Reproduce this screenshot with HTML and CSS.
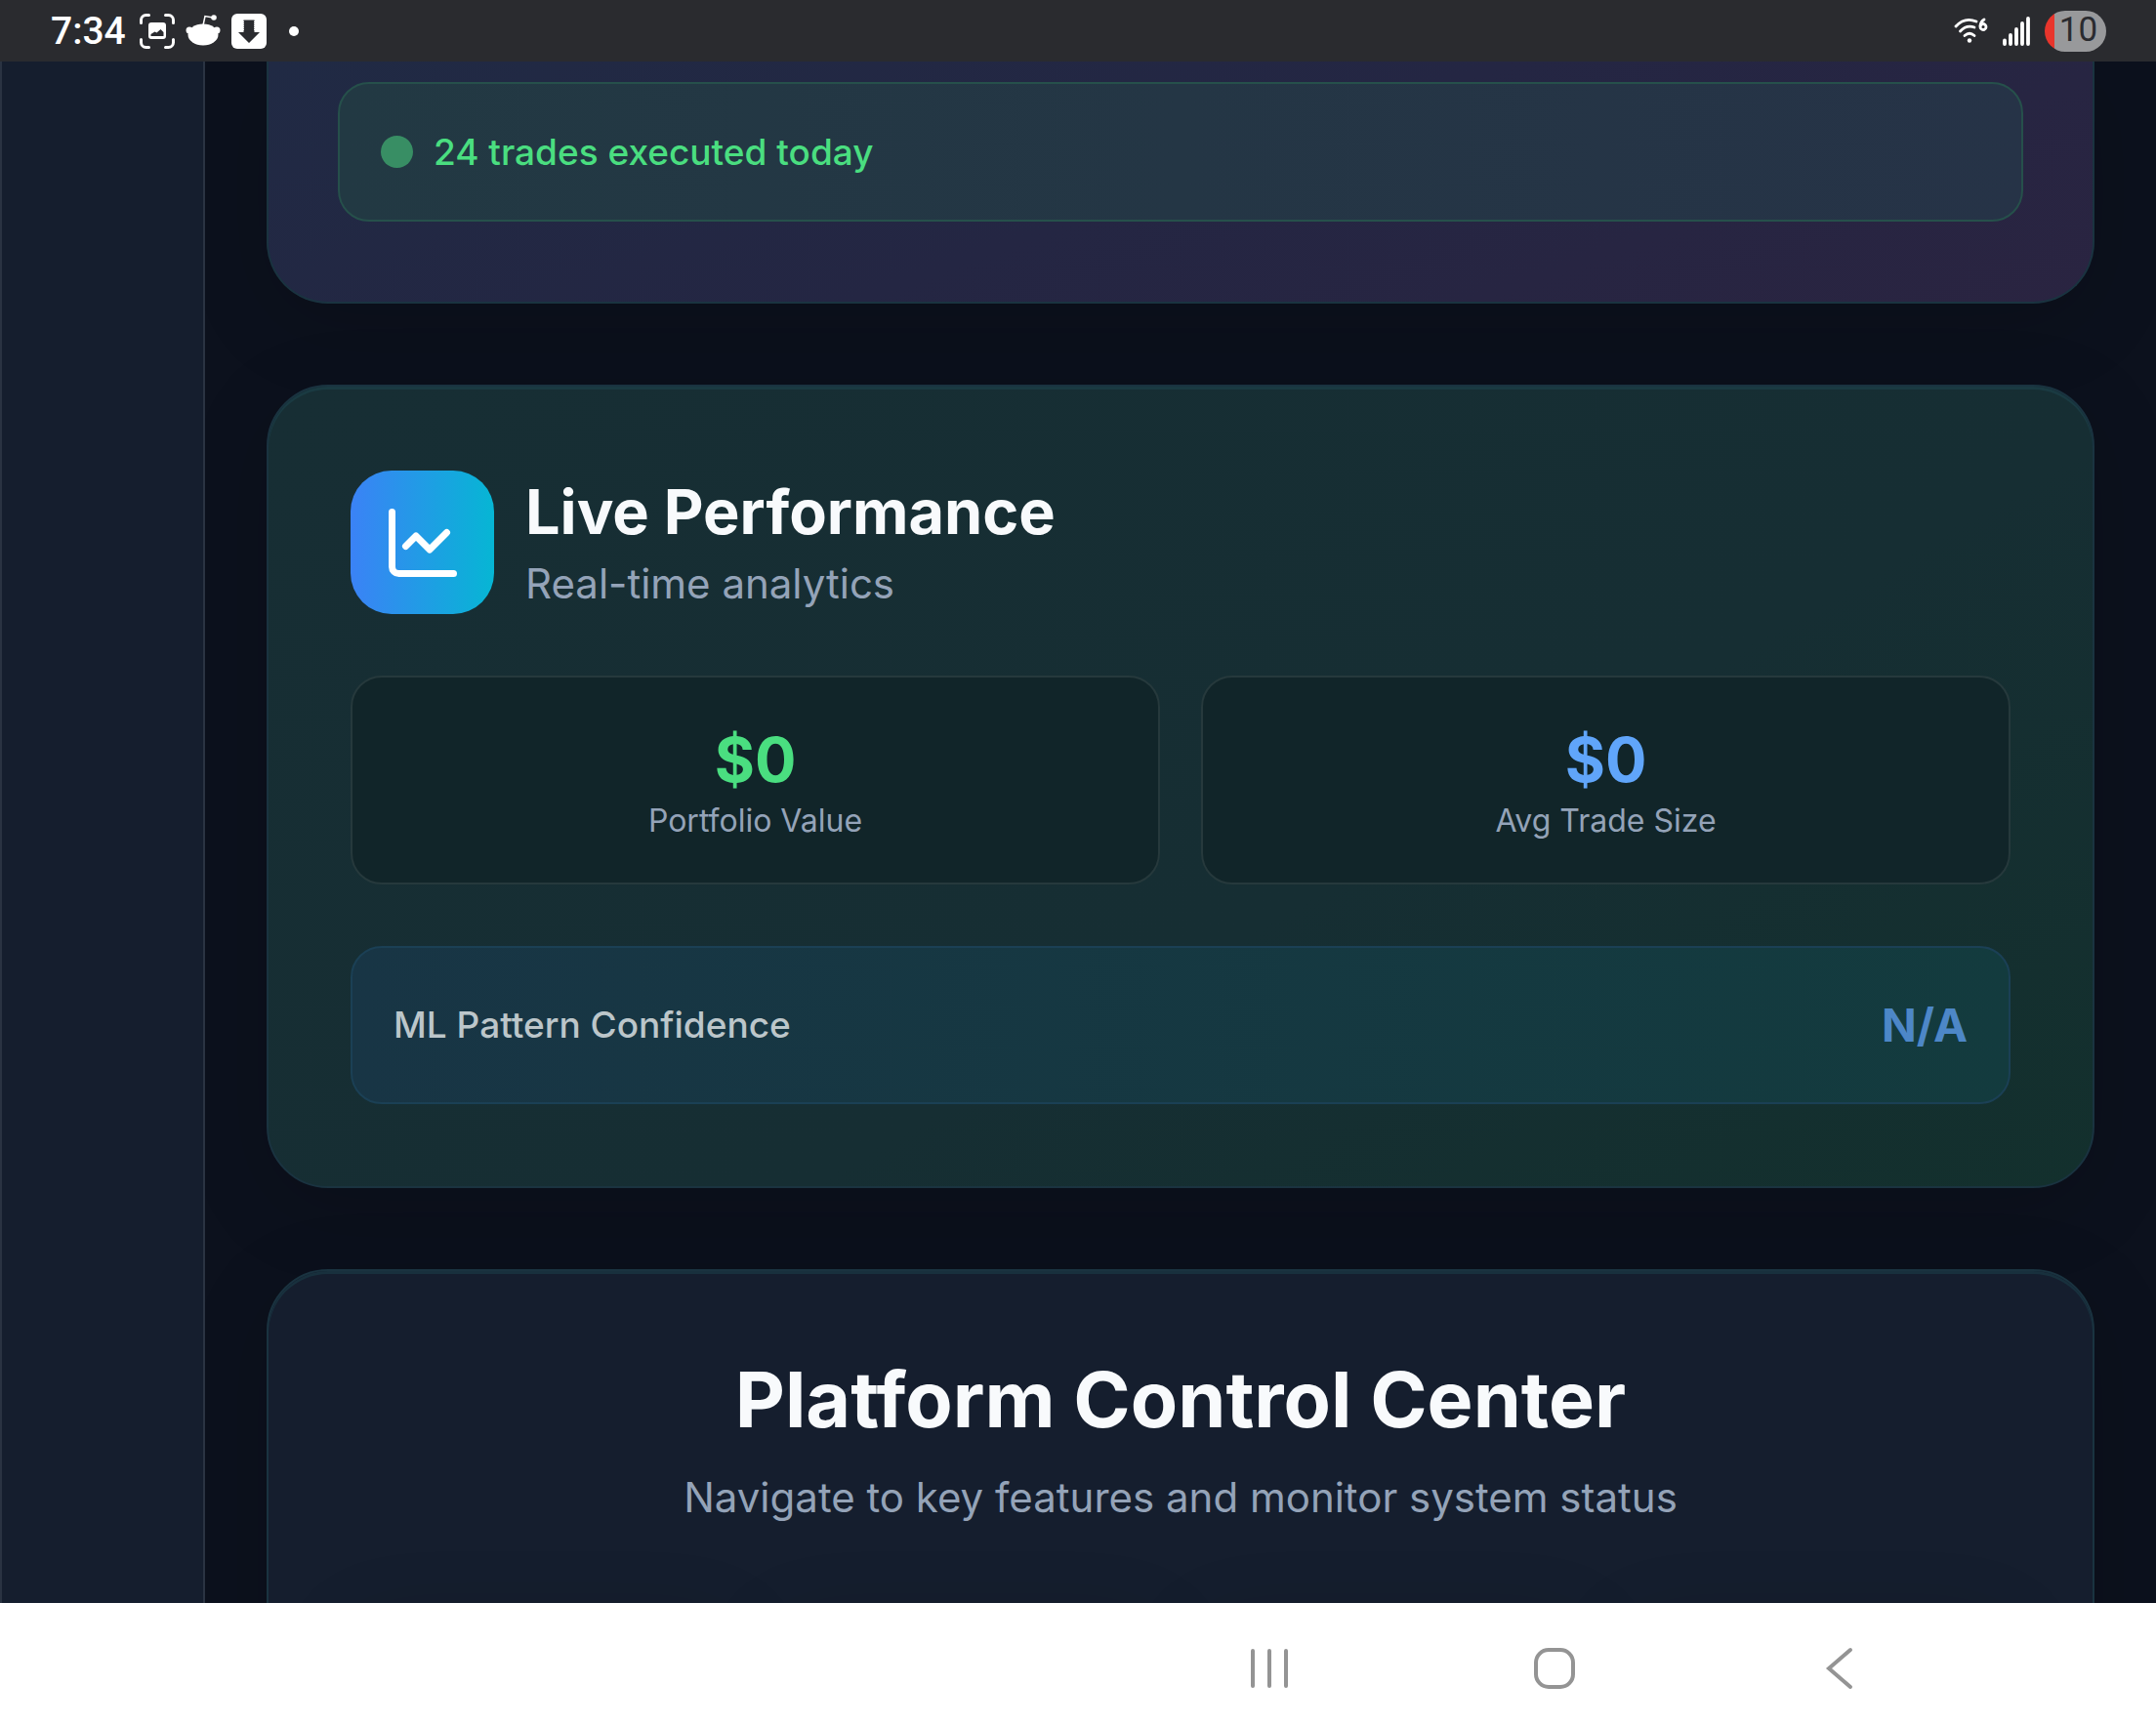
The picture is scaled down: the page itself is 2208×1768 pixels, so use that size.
FILE: index.html
```html
<!DOCTYPE html>
<html lang="en">
<head>
<meta charset="utf-8">
<meta name="viewport" content="width=device-width, initial-scale=1">
<title>Platform Control Center</title>
<link rel="stylesheet" href="styles.css">
</head>
<body>
<header class="status">
  <div class="status-group">
    <span class="clock">7:34</span>
    <svg class="status-icon" width="36" height="36" viewBox="0 0 36 36" aria-hidden="true">
      <path d="M1.500 9.500V6.500a5 5 0 0 1 5-5h3M26.500 1.500h3a5 5 0 0 1 5 5v3M34.500 26.500v3a5 5 0 0 1-5 5h-3M9.500 34.500h-3a5 5 0 0 1-5-5v-3" fill="none" stroke="#fff" stroke-width="3" stroke-linecap="round"/>
      <path fill="#fff" fill-rule="evenodd" d="M12 9h12a3 3 0 0 1 3 3v11a3 3 0 0 1-3 3H12a3 3 0 0 1-3-3V12a3 3 0 0 1 3-3zM11.500 23h13v-4l-3-3-4 3.500-2-1-4 2.500z"/>
    </svg>
    <svg class="status-icon" width="36" height="36" viewBox="0 0 36 36" aria-hidden="true">
      <path d="M18 12l2-9.500 8 1.500" fill="none" stroke="#fff" stroke-width="1.500"/>
      <circle cx="29" cy="4" r="2.800" fill="#fff"/>
      <circle cx="4" cy="17" r="3.500" fill="#fff"/>
      <circle cx="32" cy="17" r="3.500" fill="#fff"/>
      <ellipse cx="18" cy="21.500" rx="15.500" ry="11" fill="#fff"/>
    </svg>
    <svg class="status-icon" width="36" height="36" viewBox="0 0 36 36" aria-hidden="true">
      <rect width="36" height="36" rx="6" fill="#fff"/>
      <path d="M12.500 6.500h11V19H29L18 30 7 19h5.500z" fill="#2a2b2f"/>
      <path d="M12.500 8v10M23.500 8v10" stroke="#fff" stroke-width="1" stroke-dasharray="1 1"/>
    </svg>
    <span class="more-dot"></span>
  </div>
  <div class="status-group status-right">
    <svg width="36" height="28" viewBox="0 0 36 28" aria-label="Wi-Fi 6" role="img">
      <g fill="none" stroke="#fff" stroke-width="2.800" stroke-linecap="round">
        <path d="M3 9Q12-1 24 4"/><path d="M7.500 14Q14 7 22 10"/><path d="M12 18.500Q17 14 22 18.500"/>
        <circle cx="31" cy="9.500" r="3"/><path d="M28 8.500Q28.500 4 32 2"/>
      </g>
      <circle cx="17" cy="23.500" r="2.200" fill="#fff"/>
    </svg>
    <svg width="28" height="30" viewBox="0 0 28 30" aria-label="Signal" role="img">
      <path d="M2 24.500v3.500M8 19v9M14 13v15M20 7v21M26 2v26" stroke="#fff" stroke-width="3.800" stroke-linecap="round"/>
    </svg>
    <span class="battery">10</span>
  </div>
</header>

<div class="app">
  <aside class="sidebar"></aside>
  <main class="content">
    <section class="card card-trades">
      <div class="notice"><span class="notice-dot"></span>24 trades executed today</div>
    </section>

    <section class="card card-live">
      <div class="card-head">
        <span class="card-icon">
          <svg width="84" height="84" viewBox="0 0 24 24" fill="none" stroke="#fff" stroke-width="2" stroke-linecap="round" stroke-linejoin="round" aria-hidden="true">
            <path d="M3 3v16a2 2 0 0 0 2 2h16"/><path d="m19 9-5 5-4-4-3 3"/>
          </svg>
        </span>
        <div>
          <h2 class="card-title">Live Performance</h2>
          <p class="card-sub">Real-time analytics</p>
        </div>
      </div>
      <div class="stats">
        <div class="stat"><div class="stat-value green">$0</div><div class="stat-label">Portfolio Value</div></div>
        <div class="stat"><div class="stat-value blue">$0</div><div class="stat-label">Avg Trade Size</div></div>
      </div>
      <div class="confidence">
        <span class="confidence-label">ML Pattern Confidence</span>
        <span class="confidence-value">N/A</span>
      </div>
    </section>

    <section class="card card-control">
      <h1 class="control-title">Platform Control Center</h1>
      <p class="card-sub">Navigate to key features and monitor system status</p>
      <div class="tiles">
        <div class="tile"></div><div class="tile"></div><div class="tile"></div><div class="tile"></div>
      </div>
    </section>
  </main>
</div>

<nav class="navbar" aria-label="System">
  <button class="nav-btn" type="button" aria-label="Recent apps">
    <svg width="44" height="44" viewBox="0 0 44 44" fill="none" stroke="#949494" stroke-width="4" stroke-linecap="round"><path d="M5 4v36M22 4v36M39 4v36"/></svg>
  </button>
  <button class="nav-btn" type="button" aria-label="Home">
    <svg width="44" height="44" viewBox="0 0 44 44" fill="none" stroke="#949494" stroke-width="4"><rect x="3" y="3" width="38" height="38" rx="13"/></svg>
  </button>
  <button class="nav-btn" type="button" aria-label="Back">
    <svg width="44" height="44" viewBox="0 0 44 44" fill="none" stroke="#949494" stroke-width="4" stroke-linecap="round"><path d="M33 3 11 22l22 19"/></svg>
  </button>
</nav>
</body>
</html>
```
FILE: styles.css
```css
* { box-sizing: border-box; }

body {
  margin: 0;
  height: 100vh;
  display: grid;
  grid-template-rows: 63px minmax(0, 1fr) 126px;
  background: #0c111d;
  color: #f8fafc;
  font-family: Inter, "Liberation Sans", sans-serif;
}

h1, h2, p { margin: 0; }

/* System status bar */
.status {
  display: flex;
  justify-content: space-between;
  align-items: center;
  padding: 0 51px 0 52px;
  background: #2a2b2f;
}
.status-group { display: flex; align-items: center; }
.clock {
  margin-right: 14px;
  color: #fff;
  font: 500 39px/48px Roboto, "Liberation Sans", sans-serif;
}
.status-icon { margin-right: 11px; }
.more-dot {
  width: 10px;
  height: 10px;
  margin-left: 12px;
  border-radius: 50%;
  background: #fff;
}
.status-right { gap: 15px; }
.battery {
  width: 63px;
  height: 42px;
  padding-left: 6px;
  border-radius: 21px;
  background: linear-gradient(90deg, #e8352c 10px, #98999b 10px);
  color: #2a2b2f;
  font: 400 35px/40px Roboto, "Liberation Sans", sans-serif;
  text-align: center;
}

/* Application area */
.app {
  display: grid;
  grid-template-columns: 210px minmax(0, 1fr);
  overflow: hidden;
}
.sidebar {
  position: relative;
  z-index: 1;
  background: #151e2e;
  border: 2px solid #2a3342;
  border-width: 0 2px;
}
.content {
  display: flex;
  flex-direction: column;
  gap: 83px;
  padding: 0 63px;
}
.card {
  flex: none;
  padding: 84px;
  border: 2px solid #1a3340;
  border-radius: 63px;
  background: #151e2e;
  box-shadow: 0 21px 84px rgba(0, 0, 0, .15), inset 0 3px 0 #18303d;
}

.card-trades {
  padding: 21px 71px 82px;
  border-top: 0;
  border-radius: 0 0 63px 63px;
  background: linear-gradient(160deg, #202a44, #242643 50%, #2a2441);
  box-shadow: 0 21px 84px rgba(0, 0, 0, .15);
}
.notice {
  display: flex;
  align-items: center;
  gap: 21px;
  height: 143px;
  padding: 0 42px;
  border: 2px solid #26504b;
  border-radius: 32px;
  background: linear-gradient(90deg, #223943, #263347);
  color: #4ade80;
  font-size: 37px;
  font-weight: 500;
}
.notice-dot {
  width: 33px;
  height: 33px;
  border-radius: 50%;
  background: #388e64;
}

.card-live {
  padding-top: 86px;
  background: linear-gradient(150deg, #172e34, #162e33 60%, #13302d);
  box-shadow: 0 21px 84px rgba(0, 0, 0, .15), inset 0 3px 0 #1a3a42;
}
.card-head { display: flex; align-items: center; gap: 32px; }
.card-icon {
  display: grid;
  place-items: center;
  width: 147px;
  height: 147px;
  border-radius: 42px;
  background: linear-gradient(90deg, #3b82f6, #06b6d4);
}
.card-title { font-size: 63px; line-height: 84px; font-weight: 700; }
.card-sub { font-size: 42px; line-height: 63px; color: #94a3b8; }

.stats {
  display: grid;
  grid-template-columns: 1fr 1fr;
  gap: 42px;
  margin: 63px 0;
}
.stat {
  padding: 42px;
  border: 2px solid #26393c;
  border-radius: 32px;
  background: #112529;
  text-align: center;
}
.stat-value { font-size: 63px; line-height: 84px; font-weight: 700; }
.stat-label { font-size: 32px; line-height: 42px; color: #94a3b8; }
.green { color: #4ade80; }
.blue { color: #60a5fa; }

.confidence {
  display: flex;
  justify-content: space-between;
  align-items: center;
  padding: 42px;
  border: 2px solid #1b4055;
  border-radius: 32px;
  background: linear-gradient(90deg, #183545, #133b3e);
  line-height: 74px;
}
.confidence-label { font-size: 37px; font-weight: 500; color: #bcc6ca; }
.confidence-value { font-size: 47px; font-weight: 700; color: #4d87c7; }

.card-control { text-align: center; }
.control-title {
  margin-bottom: 21px;
  font-size: 79px;
  line-height: 95px;
  font-weight: 700;
}
.tiles {
  display: grid;
  grid-template-columns: repeat(4, 1fr);
  gap: 42px;
  margin-top: 84px;
}
.tile {
  height: 360px;
  border-radius: 42px;
  background: #151e2e;
  box-shadow: 0 21px 84px rgba(0, 0, 0, .2);
}

/* System navigation */
.navbar {
  display: flex;
  justify-content: flex-end;
  padding: 8px 178px 0 0;
  background: #fff;
}
.nav-btn {
  display: grid;
  place-items: center;
  width: 292px;
  border: 0;
  background: none;
}
```
